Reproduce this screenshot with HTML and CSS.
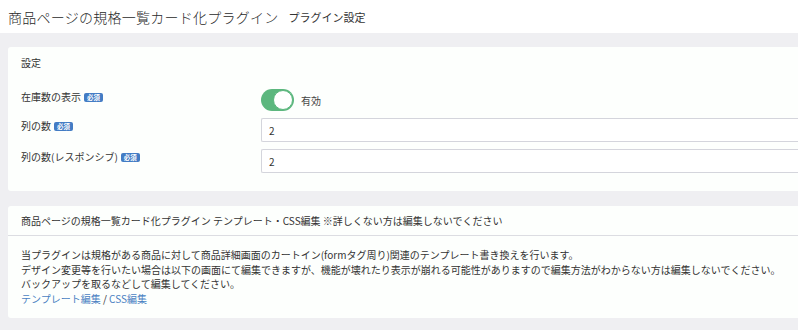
FILE: index.html
```html
<!DOCTYPE html>
<html lang="ja">
<head>
<meta charset="utf-8">
<link rel="stylesheet" href="styles.css">
</head>
<body>
<header class="page-header">
  <h1 class="title">商品ページの規格一覧カード化プラグイン</h1>
  <span class="subtitle">プラグイン設定</span>
</header>
<main class="content">
  <section class="card">
    <div class="card-header plain">設定</div>
    <div class="card-body form">
      <div class="row">
        <div class="label">在庫数の表示<span class="badge">必須</span></div>
        <div class="field switch-field">
          <span class="switch"><span class="knob"></span></span>
          <span class="switch-text">有効</span>
        </div>
      </div>
      <div class="row">
        <div class="label">列の数<span class="badge">必須</span></div>
        <div class="field"><div class="input">2</div></div>
      </div>
      <div class="row">
        <div class="label">列の数(レスポンシブ)<span class="badge">必須</span></div>
        <div class="field"><div class="input">2</div></div>
      </div>
    </div>
  </section>
  <section class="card">
    <div class="card-header">商品ページの規格一覧カード化プラグイン テンプレート・CSS編集 ※詳しくない方は編集しないでください</div>
    <div class="card-body text">
      <p>当プラグインは規格がある商品に対して商品詳細画面のカートイン(formタグ周り)関連のテンプレート書き換えを行います。<br>デザイン変更等を行いたい場合は以下の画面にて編集できますが、機能が壊れたり表示が崩れる可能性がありますので編集方法がわからない方は編集しないでください。<br>バックアップを取るなどして編集してください。<br><a href="#" class="link">テンプレート編集</a> / <a href="#" class="link">CSS編集</a></p>
    </div>
  </section>
</main>
</body>
</html>
```

FILE: styles.css
```css
html, body {
  margin: 0;
  padding: 0;
}
body {
  width: 798px;
  height: 330px;
  overflow: hidden;
  background: #efeff2;
  font-family: "Noto Sans CJK JP", "Noto Sans", sans-serif;
  color: #333;
  font-size: 10px;
  line-height: 15px;
}
.page-header {
  background: #ffffff;
  height: 33px;
  display: flex;
  align-items: center;
  padding: 0 8px;
  box-sizing: border-box;
  gap: 10px;
}
.title {
  margin: 0;
  font-size: 14px;
  font-weight: 300;
  line-height: 20px;
  color: #2a2a2a;
  letter-spacing: 0.25px;
}
.subtitle {
  font-size: 11px;
  line-height: 20px;
  color: #333;
  padding-top: 1px;
}
.content {
  padding: 14px 0 0 8px;
  display: flex;
  flex-direction: column;
  gap: 15px;
}
.card {
  background: #fdfffd;
  border-radius: 3px;
  margin-right: -6px;
}
.card-header {
  padding: 7px 13px 7px;
  border-bottom: 1px solid #dcdde2;
}
.card-header.plain {
  border-bottom: none;
  padding: 8px 13px 7px;
}
.card-body.form {
  padding: 12px 0 18px 13px;
  display: flex;
  flex-direction: column;
  gap: 7px;
}
.row {
  display: grid;
  grid-template-columns: 240px 1fr;
  align-items: start;
}
.label {
  display: flex;
  align-items: center;
  gap: 3px;
}
.badge {
  display: inline-block;
  background: #437cc4;
  color: #fff;
  font-size: 6.5px;
  line-height: 9px;
  height: 9px;
  padding: 0 3px;
  border-radius: 2px;
  font-weight: bold;
  margin-top: 1px;
}
.switch-field {
  display: flex;
  align-items: center;
  gap: 7px;
  height: 22px;
}
.switch {
  width: 33px;
  height: 22px;
  border-radius: 11px;
  background: #5cb77e;
  position: relative;
  flex: none;
}
.knob {
  position: absolute;
  right: 1px;
  top: 1px;
  width: 18px;
  height: 18px;
  border-radius: 50%;
  background: #fff;
  border: 1px solid #5cb77e;
}
.switch-text {
  color: #444;
}
.input {
  height: 24px;
  box-sizing: border-box;
  border: 1px solid #d4d5dc;
  border-right: none;
  border-radius: 2px 0 0 2px;
  padding: 0 7px;
  display: flex;
  align-items: center;
  color: #333;
  background: #fff;
}
.card-body.text {
  padding: 12px 13px 12px;
}
.card-body.text p {
  margin: 0;
  line-height: 14.5px;
}
.link {
  color: #4a7fc2;
  text-decoration: none;
}
```
